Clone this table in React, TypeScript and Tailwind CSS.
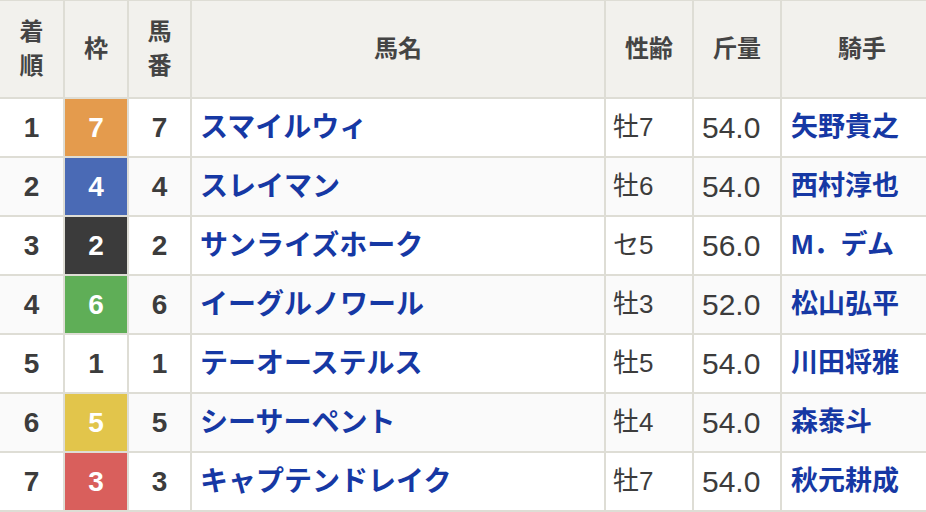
import React from "react";

type Row = {
  rank: number;
  waku: number;
  num: number;
  horse: string;
  sexAge: string;
  weight: string;
  jockey: string;
};

const rows: Row[] = [
  { rank: 1, waku: 7, num: 7, horse: "スマイルウィ", sexAge: "牡7", weight: "54.0", jockey: "矢野貴之" },
  { rank: 2, waku: 4, num: 4, horse: "スレイマン", sexAge: "牡6", weight: "54.0", jockey: "西村淳也" },
  { rank: 3, waku: 2, num: 2, horse: "サンライズホーク", sexAge: "セ5", weight: "56.0", jockey: "M．デム" },
  { rank: 4, waku: 6, num: 6, horse: "イーグルノワール", sexAge: "牡3", weight: "52.0", jockey: "松山弘平" },
  { rank: 5, waku: 1, num: 1, horse: "テーオーステルス", sexAge: "牡5", weight: "54.0", jockey: "川田将雅" },
  { rank: 6, waku: 5, num: 5, horse: "シーサーペント", sexAge: "牡4", weight: "54.0", jockey: "森泰斗" },
  { rank: 7, waku: 3, num: 3, horse: "キャプテンドレイク", sexAge: "牡7", weight: "54.0", jockey: "秋元耕成" },
];

// 枠番ごとの色
const wakuColor: Record<number, string> = {
  1: "bg-white text-[#3c3c3c]",
  2: "bg-[#3b3b3b] text-white",
  3: "bg-[#d95f5c] text-white",
  4: "bg-[#4a6ab5] text-white",
  5: "bg-[#e2c54b] text-white",
  6: "bg-[#5fae57] text-white",
  7: "bg-[#e49b4d] text-white",
};

const font = "font-['Liberation_Sans','Noto_Sans_CJK_JP',sans-serif]";

export default function App() {
  return (
    <div className={`w-[926px] h-[512px] overflow-hidden bg-white ${font}`}>
      <div className="grid grid-cols-[63px_62px_61px_412px_86px_86px_160px] gap-[2px] bg-[#deddd5] pt-[1px] pb-[2px] w-[936px]">

        {/* Header */}
        <div className="bg-[#f2f1ed] h-[96px] flex flex-col items-center justify-center text-[24px] font-bold text-[#444] leading-[34px]">
          <span>着</span>
          <span>順</span>
        </div>
        <div className="bg-[#f2f1ed] h-[96px] flex items-center justify-center text-[24px] font-bold text-[#444]">
          枠
        </div>
        <div className="bg-[#f2f1ed] h-[96px] flex flex-col items-center justify-center text-[24px] font-bold text-[#444] leading-[34px]">
          <span>馬</span>
          <span>番</span>
        </div>
        <div className="bg-[#f2f1ed] h-[96px] flex items-center justify-center text-[24px] font-bold text-[#444]">
          馬名
        </div>
        <div className="bg-[#f2f1ed] h-[96px] flex items-center justify-center text-[24px] font-bold text-[#444]">
          性齢
        </div>
        <div className="bg-[#f2f1ed] h-[96px] flex items-center justify-center text-[24px] font-bold text-[#444]">
          斤量
        </div>
        <div className="bg-[#f2f1ed] h-[96px] flex items-center justify-center text-[24px] font-bold text-[#444]">
          騎手
        </div>

        {/* Rows */}
        {rows.map((r, i) => {
          const bg = i % 2 === 0 ? "bg-white" : "bg-[#fafafa]";
          return (
            <React.Fragment key={r.rank}>
              <div className={`${bg} h-[57px] flex items-center justify-center text-[28px] font-bold text-[#3c3c3c]`}>
                {r.rank}
              </div>
              <div className={`${wakuColor[r.waku]} h-[57px] flex items-center justify-center text-[28px] font-bold`}>
                {r.waku}
              </div>
              <div className={`${bg} h-[57px] flex items-center justify-center text-[28px] font-bold text-[#3c3c3c]`}>
                {r.num}
              </div>
              <div className={`${bg} h-[57px] flex items-center pl-[8px] text-[28px] font-bold text-[#1638a4]`}>
                {r.horse}
              </div>
              <div className={`${bg} h-[57px] flex items-center pl-[7px] text-[26px] text-[#3c3c3c]`}>
                {r.sexAge}
              </div>
              <div className={`${bg} h-[57px] flex items-center pl-[8px] text-[30px] text-[#3c3c3c]`}>
                {r.weight}
              </div>
              <div className={`${bg} h-[57px] flex items-center pl-[9px] text-[27px] font-bold text-[#1638a4] whitespace-nowrap`}>
                {r.jockey}
              </div>
            </React.Fragment>
          );
        })}

      </div>
    </div>
  );
}
